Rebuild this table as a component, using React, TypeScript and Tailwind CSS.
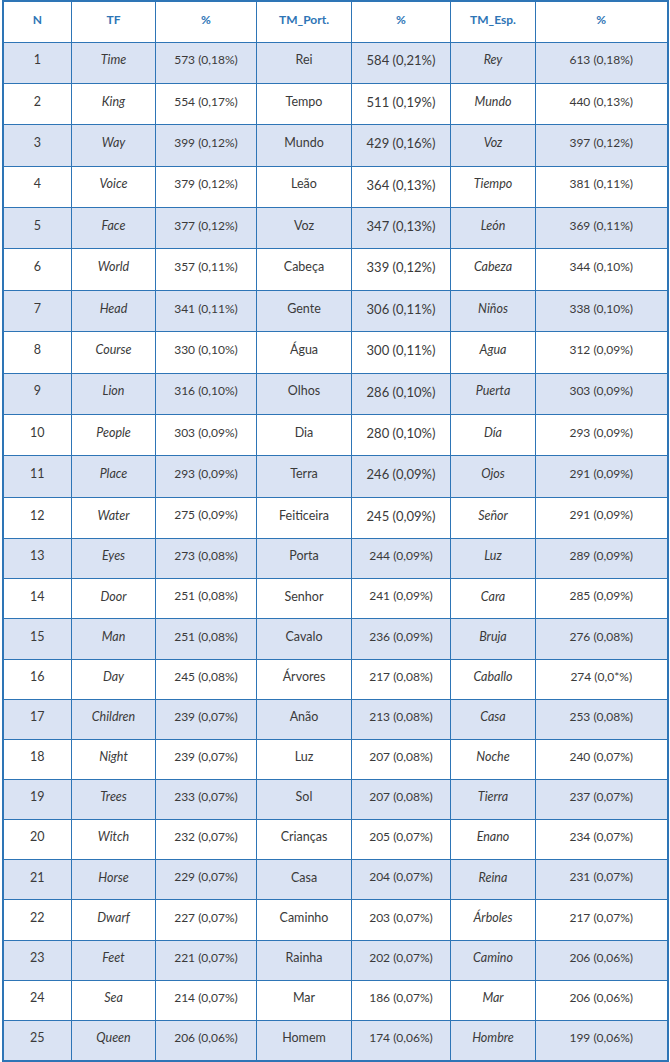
const rows: [string, string, string, string, string, string, string][] = [
  ["1", "Time", "573 (0,18%)", "Rei", "584 (0,21%)", "Rey", "613 (0,18%)"],
  ["2", "King", "554 (0,17%)", "Tempo", "511 (0,19%)", "Mundo", "440 (0,13%)"],
  ["3", "Way", "399 (0,12%)", "Mundo", "429 (0,16%)", "Voz", "397 (0,12%)"],
  ["4", "Voice", "379 (0,12%)", "Leão", "364 (0,13%)", "Tiempo", "381 (0,11%)"],
  ["5", "Face", "377 (0,12%)", "Voz", "347 (0,13%)", "León", "369 (0,11%)"],
  ["6", "World", "357 (0,11%)", "Cabeça", "339 (0,12%)", "Cabeza", "344 (0,10%)"],
  ["7", "Head", "341 (0,11%)", "Gente", "306 (0,11%)", "Niños", "338 (0,10%)"],
  ["8", "Course", "330 (0,10%)", "Água", "300 (0,11%)", "Agua", "312 (0,09%)"],
  ["9", "Lion", "316 (0,10%)", "Olhos", "286 (0,10%)", "Puerta", "303 (0,09%)"],
  ["10", "People", "303 (0,09%)", "Dia", "280 (0,10%)", "Día", "293 (0,09%)"],
  ["11", "Place", "293 (0,09%)", "Terra", "246 (0,09%)", "Ojos", "291 (0,09%)"],
  ["12", "Water", "275 (0,09%)", "Feiticeira", "245 (0,09%)", "Señor", "291 (0,09%)"],
  ["13", "Eyes", "273 (0,08%)", "Porta", "244 (0,09%)", "Luz", "289 (0,09%)"],
  ["14", "Door", "251 (0,08%)", "Senhor", "241 (0,09%)", "Cara", "285 (0,09%)"],
  ["15", "Man", "251 (0,08%)", "Cavalo", "236 (0,09%)", "Bruja", "276 (0,08%)"],
  ["16", "Day", "245 (0,08%)", "Árvores", "217 (0,08%)", "Caballo", "274 (0,0*%)"],
  ["17", "Children", "239 (0,07%)", "Anão", "213 (0,08%)", "Casa", "253 (0,08%)"],
  ["18", "Night", "239 (0,07%)", "Luz", "207 (0,08%)", "Noche", "240 (0,07%)"],
  ["19", "Trees", "233 (0,07%)", "Sol", "207 (0,08%)", "Tierra", "237 (0,07%)"],
  ["20", "Witch", "232 (0,07%)", "Crianças", "205 (0,07%)", "Enano", "234 (0,07%)"],
  ["21", "Horse", "229 (0,07%)", "Casa", "204 (0,07%)", "Reina", "231 (0,07%)"],
  ["22", "Dwarf", "227 (0,07%)", "Caminho", "203 (0,07%)", "Árboles", "217 (0,07%)"],
  ["23", "Feet", "221 (0,07%)", "Rainha", "202 (0,07%)", "Camino", "206 (0,06%)"],
  ["24", "Sea", "214 (0,07%)", "Mar", "186 (0,07%)", "Mar", "206 (0,06%)"],
  ["25", "Queen", "206 (0,06%)", "Homem", "174 (0,06%)", "Hombre", "199 (0,06%)"],
]

const headers = ["N", "TF", "%", "TM_Port.", "%", "TM_Esp.", "%"]
const widths = ["w-[69px]", "w-[84px]", "w-[101px]", "w-[95px]", "w-[99px]", "w-[85px]", "w-[132px]"]

export default function App() {
  return (
    <div className="bg-white w-[670px] min-h-[1062px] pl-[1.5px] font-['Lato','Noto_Sans',sans-serif] text-[#3a3a3a]">
      <table className="w-[666px] table-fixed border-collapse border-2 border-[#2e75b6]">
        <colgroup>
          {widths.map((w, i) => (
            <col key={i} className={w} />
          ))}
        </colgroup>
        <thead>
          <tr className="h-[41px]">
            {headers.map((h, i) => (
              <th
                key={i}
                className="border border-[#2e75b6] text-center align-middle text-[12px] font-bold text-[#2e75b6] pb-[3px]"
              >
                {h}
              </th>
            ))}
          </tr>
        </thead>
        <tbody>
          {rows.map((r, i) => {
            const big = i < 12
            return (
              <tr
                key={r[0]}
                className={`${big ? "h-[41.4px]" : "h-[40.15px]"} ${i % 2 === 0 ? "bg-[#dae3f3]" : "bg-white"}`}
              >
                <td className="border border-[#2e75b6] text-center text-[12.5px] pb-[4px]">{r[0]}</td>
                <td className="border border-[#2e75b6] text-center text-[12.5px] italic pb-[4px]">{r[1]}</td>
                <td className="border border-[#2e75b6] text-center text-[12px] pb-[5px]">{r[2]}</td>
                <td className="border border-[#2e75b6] text-center text-[12.5px] pb-[4px]">{r[3]}</td>
                <td
                  className={`border border-[#2e75b6] text-center ${big ? "text-[13px] pb-[3px]" : "text-[12px] pb-[5px]"}`}
                >
                  {r[4]}
                </td>
                <td className="border border-[#2e75b6] text-center text-[12.5px] italic pb-[4px]">{r[5]}</td>
                <td className="border border-[#2e75b6] text-center text-[12px] pb-[5px]">{r[6]}</td>
              </tr>
            )
          })}
        </tbody>
      </table>
    </div>
  )
}
